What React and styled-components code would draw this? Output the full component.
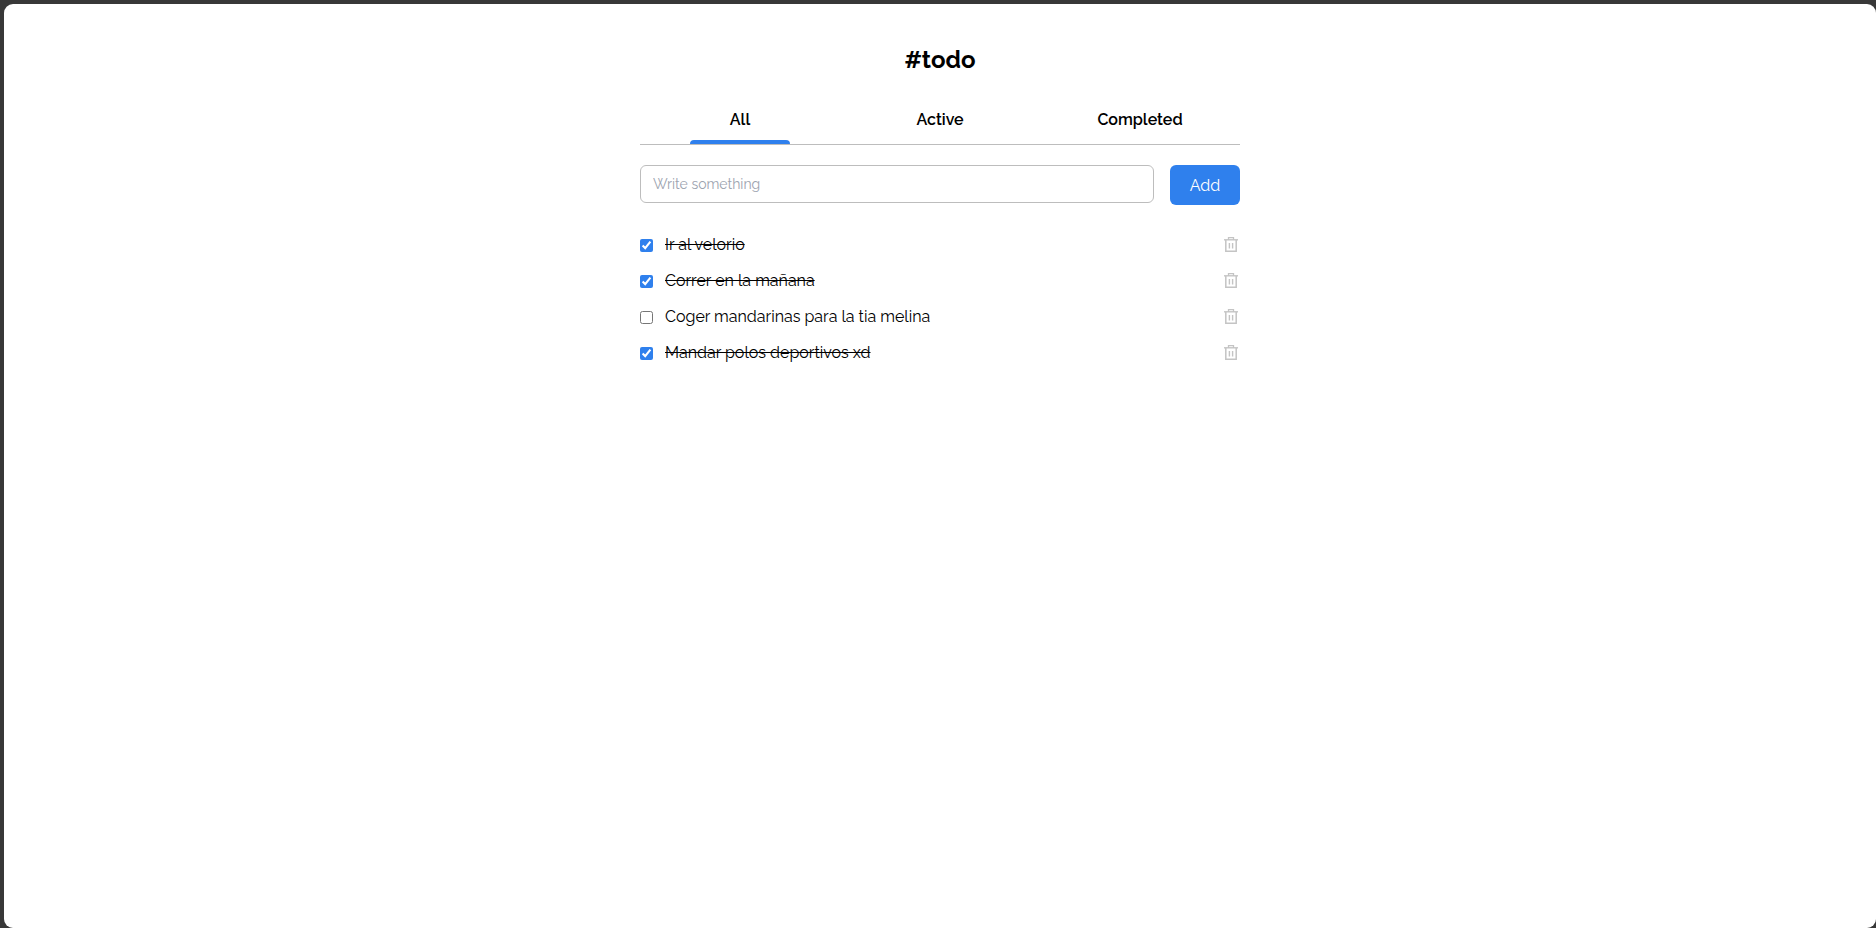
import React, { useState } from "react";
import styled, { createGlobalStyle } from "styled-components";

const GlobalStyle = createGlobalStyle`
  *, *::before, *::after { box-sizing: border-box; }
  body {
    margin: 0;
    background: #383838;
    color: #000;
    font-family: Raleway, Lato, "Liberation Sans", sans-serif;
    font-size: 16px;
  }
  button, input { font: inherit; }
`;

const Frame = styled.div`
  min-height: 100vh;
  display: flex;
  padding: 4px 0 0 4px;
`;

const Page = styled.main`
  flex: 1;
  padding: 40px 16px;
  background: #fff;
  border-radius: 9px;
`;

const Content = styled.div`
  max-width: 600px;
  margin: 0 auto;
`;

const Title = styled.h1`
  margin: 0 0 32px;
  font-size: 24px;
  font-weight: 700;
  line-height: 32px;
  text-align: center;
`;

const Tabs = styled.nav`
  display: grid;
  grid-template-columns: repeat(3, 1fr);
  justify-items: center;
  border-bottom: 1px solid #bdbdbd;
`;

const Tab = styled.button`
  display: flex;
  flex-direction: column;
  align-items: center;
  gap: 8px;
  min-width: 100px;
  padding: 0;
  border: 0;
  background: none;
  color: #000;
  font-weight: 600;
  line-height: 24px;
  cursor: pointer;

  &::after {
    content: "";
    width: 100px;
    height: 4px;
    border-radius: 4px 4px 0 0;
    background: ${({ $active }) => ($active ? "#2f80ed" : "transparent")};
  }
`;

const AddForm = styled.form`
  display: flex;
  align-items: flex-start;
  gap: 16px;
  margin-top: 20px;
`;

const TextField = styled.input`
  flex: 1;
  min-width: 0;
  height: 38px;
  padding: 0 12px;
  border: 1px solid #bdbdbd;
  border-radius: 6px;
  background: #fff;
  font-size: 14px;

  &::placeholder { color: #9ca3af; opacity: 1; }
`;

const AddButton = styled.button`
  width: 70px;
  height: 40px;
  padding: 0;
  border: 0;
  border-radius: 6px;
  background: #2f80ed;
  color: #fff;
  cursor: pointer;
`;

const List = styled.ul`
  display: grid;
  gap: 12px;
  margin: 28px 0 0;
  padding: 0;
  list-style: none;
`;

const Item = styled.li`
  display: flex;
  align-items: center;
  justify-content: space-between;
  height: 24px;
`;

const ItemLabel = styled.label`
  display: flex;
  align-items: center;
  gap: 12px;
  line-height: 24px;
`;

const Checkbox = styled.input`
  width: 13px;
  height: 13px;
  margin: 1px 0 0;
  accent-color: #2f80ed;
`;

const ItemText = styled.span`
  text-decoration: ${({ $done }) => ($done ? "line-through" : "none")};
`;

const DeleteButton = styled.button`
  display: flex;
  padding: 0;
  border: 0;
  background: none;
  color: #c4c4c4;
  cursor: pointer;
`;

const TrashIcon = () => (
  <svg width="18" height="18" viewBox="0 0 18 18" fill="none" stroke="currentColor" aria-hidden="true">
    <path d="M6.5 4V1.7H11.5V4" strokeWidth="1.3" />
    <path d="M2 3.8H16" strokeWidth="1.4" />
    <path d="M3.8 4V15.2H14.2V4" strokeWidth="1.5" />
    <path d="M7.4 7V12.5M10.6 7V12.5" strokeWidth="1.4" />
  </svg>
);

const filters = ["All", "Active", "Completed"];

const initialTasks = [
  { id: 1, text: "Ir al velorio", done: true },
  { id: 2, text: "Correr en la mañana", done: true },
  { id: 3, text: "Coger mandarinas para la tia melina", done: false },
  { id: 4, text: "Mandar polos deportivos xd", done: true },
];

export default function App() {
  const [filter, setFilter] = useState("All");
  const [tasks, setTasks] = useState(initialTasks);
  const [draft, setDraft] = useState("");

  const visible = tasks.filter(
    (task) => filter === "All" || task.done === (filter === "Completed")
  );

  const addTask = (event) => {
    event.preventDefault();
    if (!draft.trim()) return;
    setTasks([...tasks, { id: Date.now(), text: draft.trim(), done: false }]);
    setDraft("");
  };

  const toggle = (id) =>
    setTasks(tasks.map((t) => (t.id === id ? { ...t, done: !t.done } : t)));

  return (
    <>
      <GlobalStyle />
      <Frame>
        <Page>
          <Content>
            <Title>#todo</Title>
            <Tabs aria-label="Filter tasks">
              {filters.map((name) => (
                <Tab
                  key={name}
                  type="button"
                  $active={filter === name}
                  aria-pressed={filter === name}
                  onClick={() => setFilter(name)}
                >
                  {name}
                </Tab>
              ))}
            </Tabs>
            <AddForm onSubmit={addTask}>
              <TextField
                type="text"
                aria-label="New task"
                placeholder="Write something"
                value={draft}
                onChange={(event) => setDraft(event.target.value)}
              />
              <AddButton type="submit">Add</AddButton>
            </AddForm>
            <List>
              {visible.map((task) => (
                <Item key={task.id}>
                  <ItemLabel>
                    <Checkbox
                      type="checkbox"
                      checked={task.done}
                      onChange={() => toggle(task.id)}
                    />
                    <ItemText $done={task.done}>{task.text}</ItemText>
                  </ItemLabel>
                  <DeleteButton
                    type="button"
                    aria-label={`Delete ${task.text}`}
                    onClick={() => setTasks(tasks.filter((t) => t.id !== task.id))}
                  >
                    <TrashIcon />
                  </DeleteButton>
                </Item>
              ))}
            </List>
          </Content>
        </Page>
      </Frame>
    </>
  );
}
